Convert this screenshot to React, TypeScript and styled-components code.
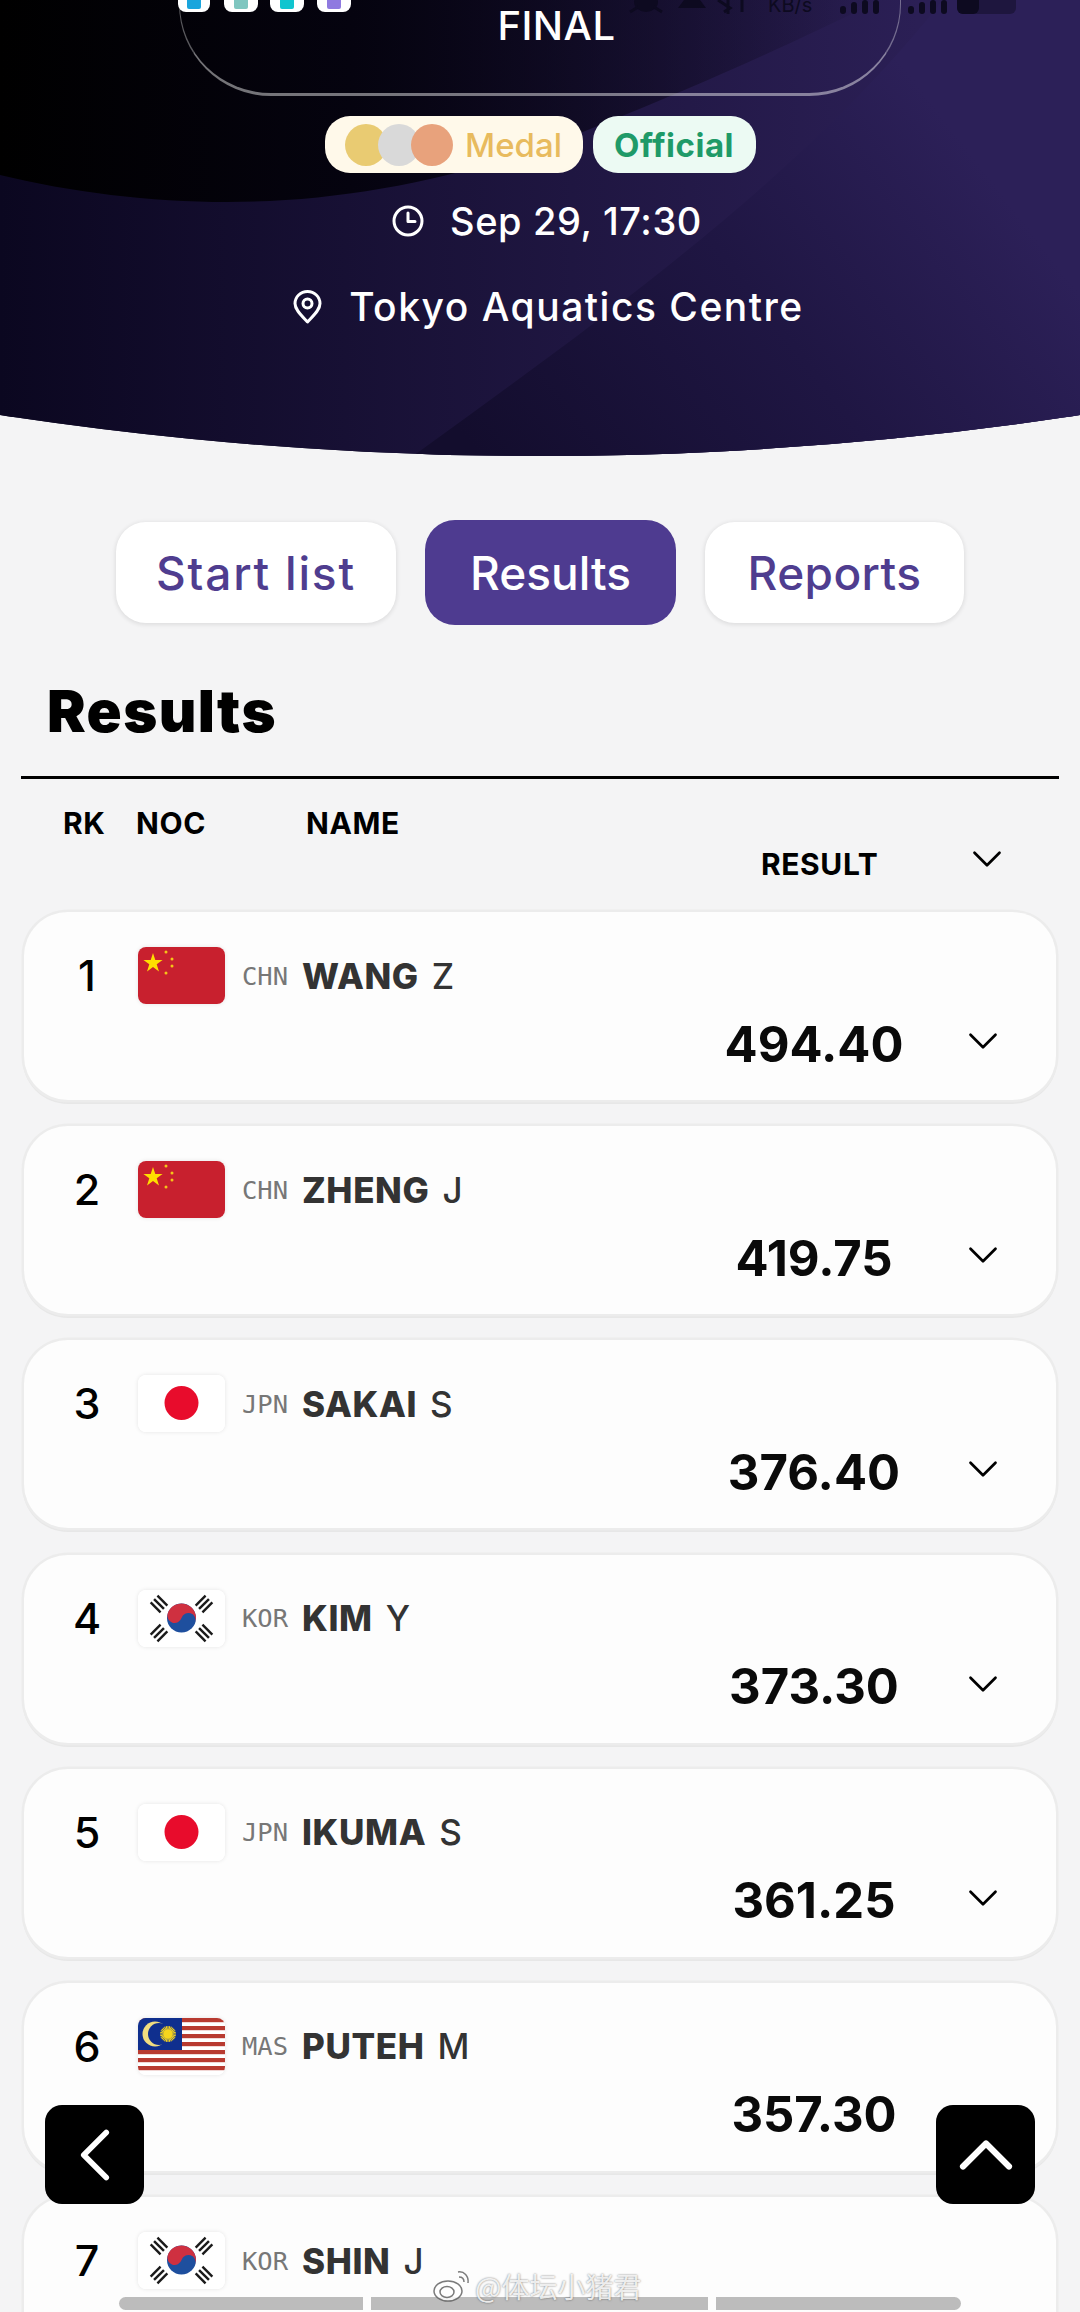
import React from "react";
import styled, { createGlobalStyle } from "styled-components";
import { ChevronDown, ChevronLeft, ChevronUp } from "lucide-react";

const Global = createGlobalStyle`
  html, body { margin: 0; padding: 0; height: 2312px; overflow: hidden; background: #f4f4f5; }
  * { box-sizing: border-box; }
  body { font-family: Inter, "Liberation Sans", sans-serif; }
`;

const Page = styled.div`
  position: relative;
  width: 1080px;
  height: 2312px;
  overflow: hidden;
  background: #f4f4f5;
`;

const Hero = styled.header`
  position: relative;
  height: 456px;
  clip-path: circle(3577px at 540px -3121px);
  background: #0e0a24;
  color: #fff;
  display: flex;
  flex-direction: column;
  align-items: center;
`;

const Backdrop = styled.svg`
  position: absolute;
  inset: 0;
  width: 1080px;
  height: 456px;
`;

const TitleCard = styled.div`
  position: relative;
  width: 722px;
  height: 98px;
  margin-top: -2px;
  border-radius: 0 0 92px 92px;
  border: 1px solid rgba(255, 255, 255, 0.35);
  border-bottom: 3px solid rgba(255, 255, 255, 0.45);
  border-top: 0;
  display: flex;
  justify-content: center;
  padding: 0 0 0 33px;
`;

const TitleText = styled.div`
  font-size: 40px;
  font-weight: 500;
  line-height: 46px;
  margin-top: 5px;
  letter-spacing: 0.5px;
`;

const PillRow = styled.div`
  position: relative;
  display: flex;
  gap: 10px;
  margin-top: 20px;
`;

const Pill = styled.div<{ $bg: string; $fg: string; $w: number; $weight: number; $track: number }>`
  width: ${(p) => p.$w}px;
  height: 57px;
  border-radius: 25px;
  background: ${(p) => p.$bg};
  color: ${(p) => p.$fg};
  font-weight: ${(p) => p.$weight};
  letter-spacing: ${(p) => p.$track}px;
  font-size: 33px;
  display: flex;
  align-items: center;
  justify-content: center;
`;

const Medals = styled.div`
  display: flex;
  margin-right: 12px;
`;

const MedalDot = styled.span<{ $c: string }>`
  width: 42px;
  height: 42px;
  border-radius: 50%;
  background: ${(p) => p.$c};
  margin-left: -9px;
  &:first-child { margin-left: 0; }
`;

const InfoRow = styled.div<{ $top: number; $gap: number; $track: number; $size: number; $shift: number }>`
  position: relative;
  display: flex;
  align-items: center;
  gap: ${(p) => p.$gap}px;
  margin-top: ${(p) => p.$top}px;
  margin-left: ${(p) => p.$shift}px;
  font-size: ${(p) => p.$size}px;
  letter-spacing: ${(p) => p.$track}px;
  font-weight: 500;
  line-height: 44px;
  white-space: nowrap;
`;

const StatusLayer = styled.div`
  position: absolute;
  top: 0;
  left: 0;
  width: 1080px;
  height: 14px;
  overflow: hidden;
`;

const AppIcon = styled.div<{ $x: number; $w: number; $bg: string }>`
  position: absolute;
  top: -20px;
  left: ${(p) => p.$x}px;
  width: ${(p) => p.$w}px;
  height: 32px;
  border-radius: 8px;
  background: #fff;
  display: flex;
  align-items: flex-end;
  justify-content: center;
  padding-bottom: 3px;
  &::after {
    content: "";
    width: 14px;
    height: 11px;
    border-radius: 2px;
    background: ${(p) => p.$bg};
  }
`;

const StatusIcons = styled.svg`
  position: absolute;
  top: 0;
  left: 620px;
`;

const SpeedText = styled.span`
  position: absolute;
  left: 768px;
  top: -6px;
  font-size: 20px;
  line-height: 22px;
  color: #0d0a20;
`;

const Tabs = styled.nav`
  display: flex;
  justify-content: flex-start;
  align-items: center;
  margin: 64px 0 0 116px;
  height: 105px;
  gap: 29px;
`;

const Tab = styled.div<{ $w: number; $active?: boolean; $track?: number }>`
  width: ${(p) => p.$w}px;
  height: ${(p) => (p.$active ? 105 : 101)}px;
  border-radius: 30px;
  background: ${(p) => (p.$active ? "#4e3b90" : "#fff")};
  color: ${(p) => (p.$active ? "#fff" : "#4f3d8f")};
  box-shadow: ${(p) => (p.$active ? "none" : "0 1px 4px 1px rgba(0,0,0,0.09)")};
  font-size: 46px;
  font-weight: 500;
  letter-spacing: ${(p) => p.$track ?? 0}px;
  display: flex;
  align-items: center;
  justify-content: center;
`;

const Heading = styled.h1`
  margin: 53px 0 0 47px;
  font-size: 58px;
  font-weight: 900;
  line-height: 66px;
  letter-spacing: 1.4px;
  color: #000;
`;

const Rule = styled.div`
  height: 3px;
  margin: 32px 21px 0;
  background: #000;
`;

const ColumnHead = styled.div`
  display: grid;
  grid-template-columns: 73px 170px 455px 114px 100px 24px;
  grid-template-rows: 41px 40px;
  margin: 27px 0 0 63px;
  font-size: 30px;
  font-weight: 700;
  line-height: 34px;
  letter-spacing: 0.6px;
  color: #000;
  height: 106px;
`;

const HeadCell = styled.span<{ $col: number; $row: number }>`
  grid-column: ${(p) => p.$col};
  grid-row: ${(p) => p.$row};
  white-space: nowrap;
`;

const HeadChevron = styled.span`
  grid-column: 6;
  grid-row: 2;
  height: 24px;
  display: flex;
  align-items: center;
  justify-content: center;
`;

const List = styled.div`
  display: flex;
  flex-direction: column;
  gap: 26.2px;
  padding: 0 24px;
`;

const Card = styled.article`
  height: 188px;
  flex: none;
  border-radius: 44px;
  background: #fdfdfd;
  box-shadow: 0 0 0 2.5px #ececec, 0 2.5px 0 1.5px #e7e7e7;
  padding-top: 35px;
`;

const TopLine = styled.div`
  display: flex;
  align-items: center;
  height: 57px;
`;

const Rank = styled.div`
  width: 114px;
  padding-left: 12px;
  text-align: center;
  font-size: 43px;
  font-weight: 500;
  color: #000;
  line-height: 57px;
`;

const FlagBox = styled.div`
  width: 87px;
  height: 57px;
  border-radius: 8px;
  overflow: hidden;
  box-shadow: 0 0 4px rgba(0, 0, 0, 0.1);
  flex: none;
  background: #fff;
`;

const FlagArt = styled.svg`
  display: block;
  width: 87px;
  height: 57px;
`;

const Code = styled.span`
  margin-left: 17px;
  width: 60px;
  font-family: "DejaVu Sans Mono", "Liberation Mono", monospace;
  font-size: 25.5px;
  color: #777;
  flex: none;
`;

const Name = styled.div`
  font-size: 35px;
  font-weight: 500;
  color: #333;
  letter-spacing: 0.6px;
  white-space: nowrap;
  & b { font-weight: 800; margin-right: 13px; }
`;

const ResultLine = styled.div`
  display: flex;
  align-items: center;
  height: 56px;
  margin-top: 12px;
`;

const Score = styled.div`
  margin-left: 680px;
  width: 220px;
  text-align: center;
  font-size: 49px;
  font-weight: 700;
  color: #0a0a0a;
`;

const RowChevron = styled.span`
  margin-left: 34px;
  height: 30px;
  display: flex;
  align-items: center;
  color: #000;
  margin-top: -6px;
`;

const FloatBtn = styled.div<{ $x: number }>`
  position: absolute;
  left: ${(p) => p.$x}px;
  top: 2105px;
  width: 99px;
  height: 99px;
  border-radius: 17px;
  background: #000;
  color: #fff;
  display: flex;
  align-items: center;
  justify-content: center;
`;

const BottomBars = styled.div`
  position: absolute;
  top: 2297px;
  left: 119px;
  display: flex;
  gap: 8px;
`;

const BottomBar = styled.div<{ $w: number; $r: string }>`
  width: ${(p) => p.$w}px;
  height: 13px;
  background: #bcbcbc;
  border-radius: ${(p) => p.$r};
`;

const Watermark = styled.div`
  position: absolute;
  left: 432px;
  top: 2268px;
  display: flex;
  align-items: center;
  gap: 3px;
  height: 36px;
  font-family: "Noto Sans CJK SC", sans-serif;
  font-size: 28px;
  color: rgba(255, 255, 255, 0.85);
  text-shadow: 0 0 2px rgba(0, 0, 0, 0.55);
  white-space: nowrap;
`;

const China = () => (
  <FlagArt viewBox="0 0 87 57">
    <rect width="87" height="57" fill="#c8202e" />
    <polygon fill="#ffde00" points="15,6 17.3,13 24.6,13 18.7,17.3 21,24.4 15,20 9,24.4 11.3,17.3 5.4,13 12.7,13" />
    <circle cx="28" cy="5" r="1.5" fill="#f5c518" />
    <circle cx="34" cy="12" r="1.5" fill="#f5c518" />
    <circle cx="34" cy="19" r="1.5" fill="#f5c518" />
    <circle cx="28" cy="26" r="1.5" fill="#f5c518" />
  </FlagArt>
);

const Japan = () => (
  <FlagArt viewBox="0 0 87 57">
    <rect width="87" height="57" fill="#fff" />
    <circle cx="43.5" cy="28" r="17" fill="#e80c2c" />
  </FlagArt>
);

const Trigram = ({ x, y, r }: { x: number; y: number; r: number }) => (
  <g transform={`translate(${x} ${y}) rotate(${r})`} fill="#1a1a1a">
    <rect x="-6" y="-7" width="2.4" height="14" />
    <rect x="-1.2" y="-7" width="2.4" height="14" />
    <rect x="3.6" y="-7" width="2.4" height="14" />
  </g>
);

const Korea = () => (
  <FlagArt viewBox="0 0 87 57">
    <rect width="87" height="57" fill="#fff" />
    <circle cx="43.5" cy="28" r="14.5" fill="#1e4f9e" />
    <path d="M29 28a14.5 14.5 0 0 1 29 0a7.25 7.25 0 0 0 -14.5 0a7.25 7.25 0 0 1 -14.5 0z" transform="rotate(18 43.5 28)" fill="#cf3040" />
    <Trigram x={21} y={14} r={-45} />
    <Trigram x={66} y={14} r={45} />
    <Trigram x={21} y={43} r={45} />
    <Trigram x={66} y={43} r={-45} />
  </FlagArt>
);

const sunRays = Array.from({ length: 14 }, (_, i) => (i * 180) / 14);

const Malaysia = () => (
  <FlagArt viewBox="0 0 87 57">
    <rect width="87" height="57" fill="#fff" />
    {[0, 8, 16, 24, 32, 40, 48].map((y) => (
      <rect key={y} y={y} width="87" height="4.2" fill="#b83a30" />
    ))}
    <rect width="44" height="32" fill="#0f2f8e" />
    <circle cx="17" cy="16" r="12.5" fill="#f0dd80" />
    <circle cx="21" cy="16" r="11" fill="#0f2f8e" />
    <g stroke="#f7d51d" strokeWidth="1.1">
      {sunRays.map((a) => (
        <line key={a} x1="30" y1="8" x2="30" y2="24" transform={`rotate(${a} 30 16)`} />
      ))}
    </g>
    <circle cx="30" cy="16" r="4.5" fill="#f7d51d" />
  </FlagArt>
);

const flags = { CHN: China, JPN: Japan, KOR: Korea, MAS: Malaysia };

type Row = { rk: number; noc: keyof typeof flags; last: string; first: string; score: string; chevron: boolean };

const rows: Row[] = [
  { rk: 1, noc: "CHN", last: "WANG", first: "Z", score: "494.40", chevron: true },
  { rk: 2, noc: "CHN", last: "ZHENG", first: "J", score: "419.75", chevron: true },
  { rk: 3, noc: "JPN", last: "SAKAI", first: "S", score: "376.40", chevron: true },
  { rk: 4, noc: "KOR", last: "KIM", first: "Y", score: "373.30", chevron: true },
  { rk: 5, noc: "JPN", last: "IKUMA", first: "S", score: "361.25", chevron: true },
  { rk: 6, noc: "MAS", last: "PUTEH", first: "M", score: "357.30", chevron: false },
  { rk: 7, noc: "KOR", last: "SHIN", first: "J", score: "", chevron: false },
];

export default function App() {
  return (
    <Page>
      <Global />
      <Hero>
        <Backdrop viewBox="0 0 1080 456">
          <defs>
            <linearGradient id="base" x1="0" y1="0" x2="1" y2="0">
              <stop offset="0" stopColor="#0b0720" />
              <stop offset="0.85" stopColor="#2b1f55" />
              <stop offset="1" stopColor="#2b1f55" />
            </linearGradient>
            <linearGradient id="swoosh" x1="0.1" y1="1" x2="0.95" y2="0.55">
              <stop offset="0" stopColor="#130d2d" />
              <stop offset="0.55" stopColor="#1f1643" />
              <stop offset="1" stopColor="#2c2058" />
            </linearGradient>
            <linearGradient id="dark" x1="0" y1="0" x2="1" y2="0">
              <stop offset="0" stopColor="#000" />
              <stop offset="0.4" stopColor="#05030f" />
              <stop offset="1" stopColor="#05030f" stopOpacity="0" />
            </linearGradient>
          </defs>
          <rect width="1080" height="456" fill="url(#base)" />
          <path d="M413 456C600 320 800 180 943 0H1080V456Z" fill="url(#swoosh)" />
          <path d="M0 175C70 192 150 202 227 202C350 202 480 175 600 125C700 85 800 40 880 0H0Z" fill="url(#dark)" />
        </Backdrop>
        <TitleCard>
          <TitleText>FINAL</TitleText>
        </TitleCard>
        <PillRow>
          <Pill $bg="#fff9ea" $fg="#e8bb5e" $w={258} $weight={500} $track={0}>
            <Medals>
              <MedalDot $c="#e9cb72" />
              <MedalDot $c="#d9d9d9" />
              <MedalDot $c="#e8a27c" />
            </Medals>
            Medal
          </Pill>
          <Pill $bg="#ecfaf3" $fg="#1f9a68" $w={163} $weight={700} $track={0.5}>
            Official
          </Pill>
        </PillRow>
        <InfoRow $top={26} $gap={26} $track={0.6} $size={38} $shift={14}>
          <svg width="32" height="32" viewBox="0 0 32 32" fill="none" stroke="#fff" strokeWidth="3" strokeLinecap="round" strokeLinejoin="round">
            <circle cx="16" cy="16" r="14" />
            <path d="M16 8v8.5h7" />
          </svg>
          Sep 29, 17:30
        </InfoRow>
        <InfoRow $top={42} $gap={27} $track={1.5} $size={39} $shift={17}>
          <svg width="29" height="34" viewBox="0 0 29 34" fill="none" stroke="#fff" strokeWidth="3" strokeLinejoin="round">
            <path d="M14.5 32C9 26 2 20 2 13.5a12.5 12 0 0 1 25 0C27 20 20 26 14.5 32z" />
            <circle cx="14.5" cy="13.5" r="4.5" />
          </svg>
          Tokyo Aquatics Centre
        </InfoRow>
        <StatusLayer>
          <AppIcon $x={178} $w={32} $bg="#1aa5dd" />
          <AppIcon $x={224} $w={34} $bg="#7fc6c0" />
          <AppIcon $x={270} $w={34} $bg="#10c5cf" />
          <AppIcon $x={317} $w={34} $bg="#8f7ae0" />
          <StatusIcons width="400" height="14" viewBox="0 0 400 14" fill="#0d0a20">
            <ellipse cx="26" cy="2" rx="12" ry="10" />
            <path d="M10 12l8-5M42 12l-8-5" stroke="#0d0a20" strokeWidth="3" />
            <path d="M58 8h28l-6-8H64z" />
            <path d="M98 0l12 8-6 4M108 0v14M122 0v12" stroke="#0d0a20" strokeWidth="3" fill="none" />
            <rect x="220" y="6" width="6" height="8" rx="3" />
            <rect x="231" y="2" width="6" height="12" rx="3" />
            <rect x="242" y="0" width="6" height="14" rx="3" />
            <rect x="253" y="0" width="6" height="14" rx="3" />
            <rect x="288" y="6" width="6" height="8" rx="3" />
            <rect x="299" y="2" width="6" height="12" rx="3" />
            <rect x="310" y="0" width="6" height="14" rx="3" />
            <rect x="321" y="0" width="6" height="14" rx="3" />
            <rect x="337" y="-10" width="59" height="24" rx="6" fillOpacity="0.45" />
            <rect x="337" y="-10" width="22" height="24" rx="6" />
          </StatusIcons>
          <SpeedText>KB/s</SpeedText>
        </StatusLayer>
      </Hero>

      <Tabs>
        <Tab $w={280} $track={1.8}>Start list</Tab>
        <Tab $w={251} $active>Results</Tab>
        <Tab $w={259} $track={0.4}>Reports</Tab>
      </Tabs>

      <Heading>Results</Heading>
      <Rule />
      <ColumnHead>
        <HeadCell $col={1} $row={1}>RK</HeadCell>
        <HeadCell $col={2} $row={1}>NOC</HeadCell>
        <HeadCell $col={3} $row={1}>NAME</HeadCell>
        <HeadCell $col={4} $row={2}>RESULT</HeadCell>
        <HeadChevron>
          <ChevronDown size={50} strokeWidth={1.3} color="#000" style={{ flex: "none" }} />
        </HeadChevron>
      </ColumnHead>

      <List>
        {rows.map((r) => {
          const Flag = flags[r.noc];
          return (
            <Card key={r.rk}>
              <TopLine>
                <Rank>{r.rk}</Rank>
                <FlagBox>
                  <Flag />
                </FlagBox>
                <Code>{r.noc}</Code>
                <Name>
                  <b>{r.last}</b>
                  {r.first}
                </Name>
              </TopLine>
              <ResultLine>
                <Score>{r.score}</Score>
                {r.chevron && (
                  <RowChevron>
                    <ChevronDown size={50} strokeWidth={1.3} />
                  </RowChevron>
                )}
              </ResultLine>
            </Card>
          );
        })}
      </List>

      <FloatBtn $x={45}>
        <ChevronLeft size={90} strokeWidth={1.5} />
      </FloatBtn>
      <FloatBtn $x={936}>
        <ChevronUp size={92} strokeWidth={1.6} />
      </FloatBtn>

      <BottomBars>
        <BottomBar $w={244} $r="7px 0 0 7px" />
        <BottomBar $w={337} $r="0" />
        <BottomBar $w={245} $r="0 7px 7px 0" />
      </BottomBars>

      <Watermark>
        <svg width="40" height="34" viewBox="0 0 40 34" fill="rgba(255,255,255,0.85)" stroke="rgba(90,90,90,0.8)" strokeWidth="1.5">
          <ellipse cx="16" cy="22" rx="14" ry="10" />
          <ellipse cx="15" cy="23" rx="7" ry="5.5" />
          <path d="M26 3c6-1 11 4 10 11M27 8c3 0 5 2 5 5" fill="none" />
        </svg>
        @体坛小猪君
      </Watermark>
    </Page>
  );
}
